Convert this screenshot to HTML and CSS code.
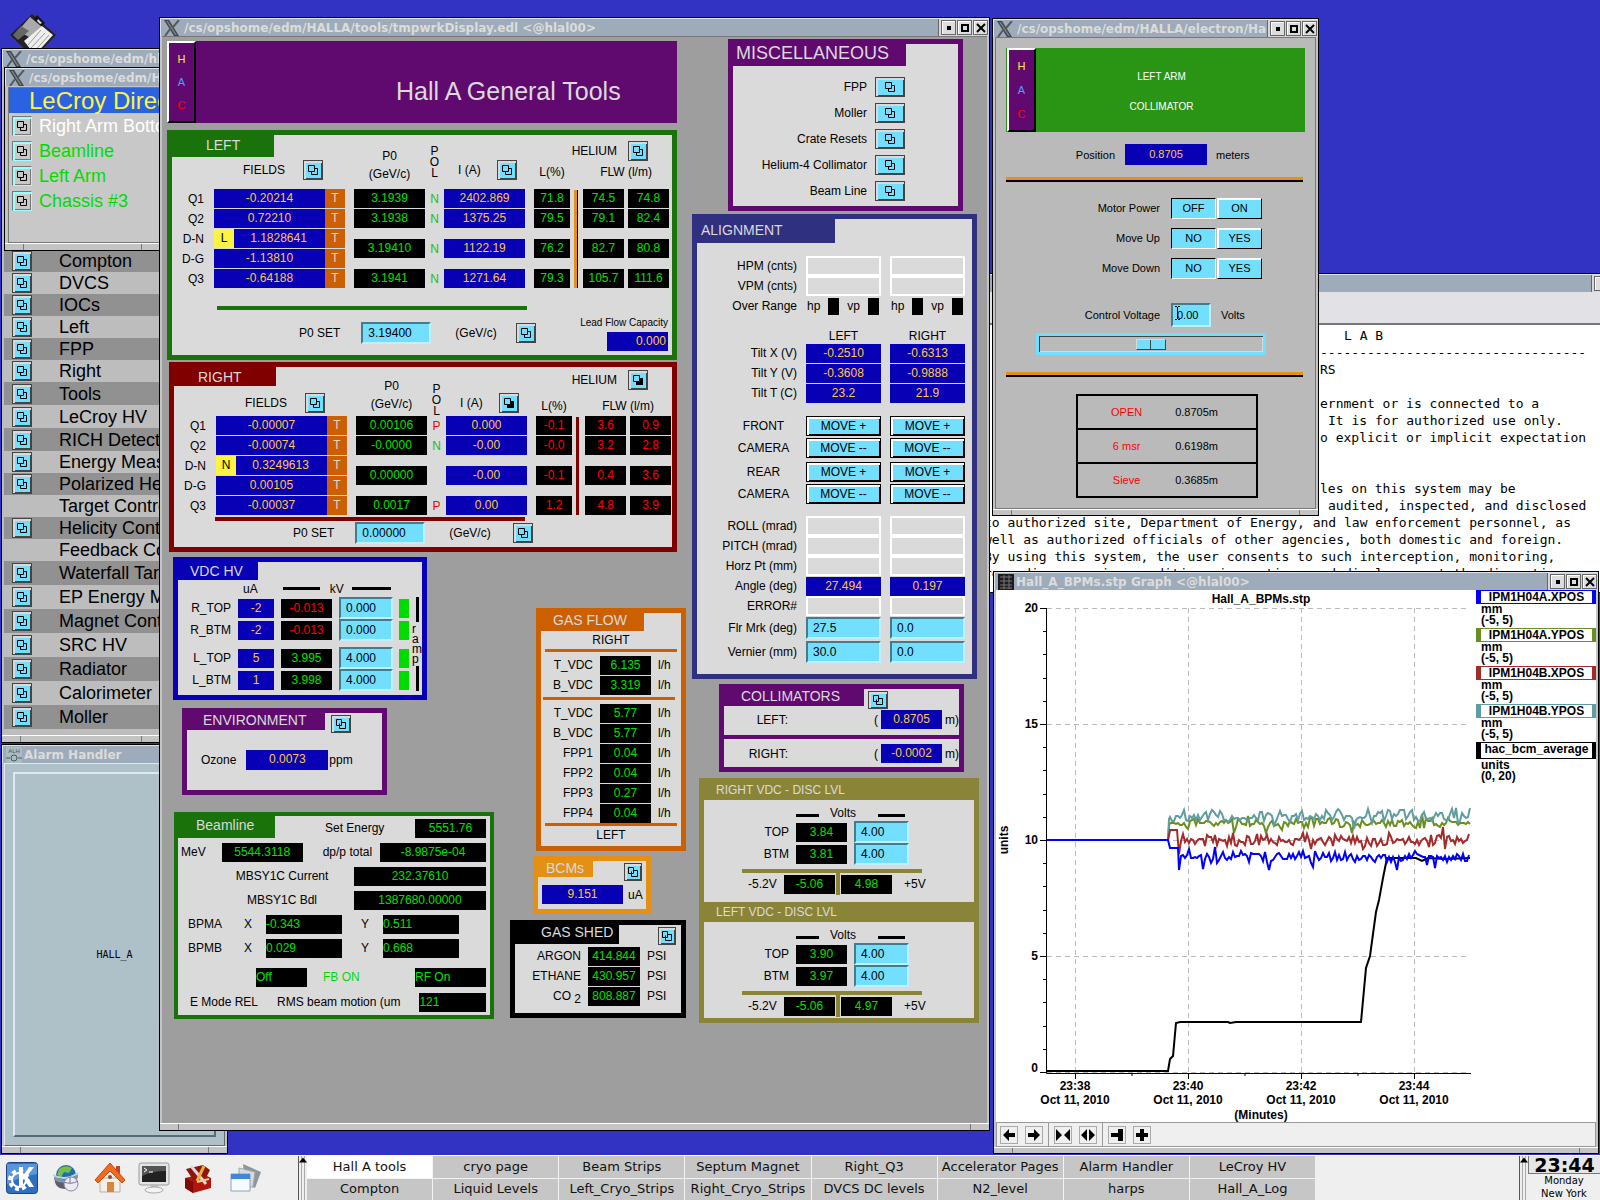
FILE: index.html
```html
<!DOCTYPE html>
<html lang="en">
<head>
  <meta charset="UTF-8" />
  <meta name="viewport" content="width=device-width, initial-scale=1" />
  <title>Hall A Operator Desktop</title>
  <link rel="stylesheet" href="styles.css">
</head>
<body>
  <!-- shared icons -->
  <svg width="0" height="0" class="defs" aria-hidden="true">
    <symbol id="rel" viewBox="0 0 10 10"><path d="M.5.5h6v6h-6zM6.5 3.5h3v6h-6v-3" fill="none" stroke="#000"/></symbol>
    <symbol id="relOn" viewBox="0 0 10 10"><path d="M3 3h7v7H3z"/><path d="M.5.5h6v6h-6z" fill="#73dfff" stroke="#000"/></symbol>
    <symbol id="relAlt" viewBox="0 0 10 10"><path d="M.5.5h5v6h-5zM3.5 4.5v5h6v-6h-4" fill="none" stroke="#000"/></symbol>
    <symbol id="xlogo" viewBox="0 0 16 16"><path d="M0 0h5l10 16h-5z" fill="#3f4448"/><path d="M2 1h2l9 14h-2z" fill="#777c80"/><path d="M15 0L9 7M6 9l-5 7" stroke="#555a5e" stroke-width="2"/></symbol>
    <symbol id="min" viewBox="0 0 12 12"><path d="M4 4h4v4H4z"/></symbol>
    <symbol id="max" viewBox="0 0 12 12"><path d="M3 3h6v6H3z" fill="none" stroke="#000" stroke-width="2"/></symbol>
    <symbol id="close" viewBox="0 0 12 12"><path d="M2 2l8 8M10 2l-8 8" stroke="#000" stroke-width="2"/></symbol>
  </svg>

  <main class="desktop">
    <svg class="floppy" viewBox="0 0 48 48" aria-hidden="true">
      <path d="M22 1L46 22L24 45L0 22z" fill="#222"/>
      <path d="M20 4L32 14L19 24L8 18z" fill="#aaa"/>
      <path d="M27 2l8 8-3 3-8-7z" fill="#111"/><path d="M28 6l4 4-2 1-3-3z" fill="#ddd"/>
      <path d="M32 13L43 22L25 42L14 28z" fill="#eee"/>
      <path d="M31 17L18 32M35 20L20 36M39 22L23 40" stroke="#999"/>
      <path d="M3 22l8-9 8 5-11 9z" fill="#666"/>
    </svg>

    <section class="window w-list">
      <header class="title"><svg><use href="#xlogo"/></svg><span>/cs/opshome/edm/hlal</span></header>
      <ul class="menu">
        <li><button class="rel" aria-label="Open Compton"><svg><use href="#rel"/></svg></button>Compton</li>
        <li><button class="rel" aria-label="Open DVCS"><svg><use href="#rel"/></svg></button>DVCS</li>
        <li><button class="rel" aria-label="Open IOCs"><svg><use href="#rel"/></svg></button>IOCs</li>
        <li><button class="rel" aria-label="Open Left"><svg><use href="#rel"/></svg></button>Left</li>
        <li><button class="rel" aria-label="Open FPP"><svg><use href="#rel"/></svg></button>FPP</li>
        <li><button class="rel" aria-label="Open Right"><svg><use href="#rel"/></svg></button>Right</li>
        <li class="mid"><button class="rel" aria-label="Open Tools"><svg><use href="#rel"/></svg></button>Tools</li>
        <li class="mid"><button class="rel" aria-label="Open LeCroy HV"><svg><use href="#rel"/></svg></button>LeCroy HV</li>
        <li class="mid"><button class="rel" aria-label="Open RICH"><svg><use href="#rel"/></svg></button>RICH Detector</li>
        <li><button class="rel" aria-label="Open Energy"><svg><use href="#rel"/></svg></button>Energy Meas</li>
        <li><button class="rel" aria-label="Open Polarized He"><svg><use href="#rel"/></svg></button>Polarized He3</li>
        <li>Target Control</li>
        <li><button class="rel" aria-label="Open Helicity"><svg><use href="#rel"/></svg></button>Helicity Control</li>
        <li>Feedback Control</li>
        <li class="tall"><button class="rel" aria-label="Open Waterfall"><svg><use href="#rel"/></svg></button>Waterfall Target</li>
        <li class="tall"><button class="rel" aria-label="Open EP Energy"><svg><use href="#rel"/></svg></button>EP Energy Meas</li>
        <li class="tall"><button class="rel" aria-label="Open Magnet"><svg><use href="#rel"/></svg></button>Magnet Control</li>
        <li class="tall"><button class="rel" aria-label="Open SRC HV"><svg><use href="#rel"/></svg></button>SRC HV</li>
        <li class="tall"><button class="rel" aria-label="Open Radiator"><svg><use href="#rel"/></svg></button>Radiator</li>
        <li class="tall"><button class="rel" aria-label="Open Calorimeter"><svg><use href="#rel"/></svg></button>Calorimeter</li>
        <li class="tall"><button class="rel" aria-label="Open Moller"><svg><use href="#rel"/></svg></button>Moller</li>
      </ul>
      <div class="grip"></div>
    </section>

    <section class="window w-lecroy">
      <header class="title"><svg><use href="#xlogo"/></svg><span>/cs/opshome/edm/HALLA</span></header>
      <div class="lecroy">
        <h1>LeCroy Directory</h1>
        <ul>
          <li class="white"><button class="rel gray" aria-label="Open Right Arm Bottom"><svg><use href="#rel"/></svg></button>Right Arm Bottom</li>
          <li><button class="rel gray" aria-label="Open Beamline"><svg><use href="#rel"/></svg></button>Beamline</li>
          <li><button class="rel gray" aria-label="Open Left Arm"><svg><use href="#rel"/></svg></button>Left Arm</li>
          <li><button class="rel gray" aria-label="Open Chassis 3"><svg><use href="#rel"/></svg></button>Chassis #3</li>
        </ul>
      </div>
      <div class="grip"></div>
    </section>

    <section class="window w-alarm">
      <header class="title">
        <svg viewBox="0 0 16 16"><path d="M0 0h16v16H0z" fill="#a9bcc3"/><text x="8" y="6" text-anchor="middle" class="alh">ALH</text><path d="M0 11h4M12 11h4M5 11a3 3 0 0 1 6 0a3 3 0 0 1-6 0" fill="none" stroke="#4d585c"/></svg>
        <span>Alarm Handler</span>
      </header>
      <div class="alarm"><div class="alarm-box">HALL_A</div></div>
      <div class="grip"></div>
    </section>

    <section class="window w-term">
      <header class="title"><span></span>
        <div class="winbtns"><button aria-label="Minimize"><svg><use href="#min"/></svg></button></div>
      </header>
      <div class="term-menu"></div>
      <div class="term">
        <p class="lab">L A B</p>
        <p class="in">----------------------------------</p>
        <p class="in">RS</p>
        <p class="in para">ernment or is connected to a</p>
        <p class="in2">It is for authorized use only.</p>
        <p class="in">o explicit or implicit expectation</p>
        <p class="in para2">les on this system may be</p>
        <p class="in2">audited, inspected, and disclosed</p>
        <p>to authorized site, Department of Energy, and law enforcement personnel, as</p>
        <p>well as authorized officials of other agencies, both domestic and foreign.</p>
        <p>By using this system, the user consents to such interception, monitoring,</p>
        <p>recording, copying, auditing, inspection, and disclosure at the discretion</p>
      </div>
    </section>

    <section class="window w-tools">
      <header class="title"><svg><use href="#xlogo"/></svg><span>/cs/opshome/edm/HALLA/tools/tmpwrkDisplay.edl &lt;@hlal00&gt;</span>
        <div class="winbtns">
          <button aria-label="Minimize"><svg><use href="#min"/></svg></button>
          <button aria-label="Maximize"><svg><use href="#max"/></svg></button>
          <button aria-label="Close"><svg><use href="#close"/></svg></button>
        </div>
      </header>

      <div class="tools">
        <div class="col-main">
          <div class="banner">
            <div class="hac"><span>H</span><span>A</span><span>C</span></div>
            <h1>Hall A General Tools</h1>
          </div>

          <section class="panel arm left-arm">
            <div class="head">
              <h2>LEFT</h2>
              <div class="helium">HELIUM <button class="rel" aria-label="Left helium"><svg><use href="#rel"/></svg></button></div>
            </div>
            <table class="quads">
              <colgroup><col class="c-name"><col class="c-field"><col class="c-t"><col class="c-p0"><col class="c-pol"><col class="c-amp"><col class="c-lvl"><col class="c-bar"><col class="c-flw"><col class="c-flw2"></colgroup>
              <thead>
                <tr>
                  <th></th>
                  <th colspan="2"><div class="hd">FIELDS <button class="rel" aria-label="Left fields"><svg><use href="#rel"/></svg></button></div></th>
                  <th><div class="stack">P0<br>(GeV/c)</div></th>
                  <th><div class="pol">P<br>O<br>L</div></th>
                  <th><div class="hd amp">I (A) <button class="rel" aria-label="Left currents"><svg><use href="#rel"/></svg></button></div></th>
                  <th>L(%)</th>
                  <th></th>
                  <th colspan="2">FLW (l/m)</th>
                </tr>
              </thead>
              <tbody>
                <tr><th>Q1</th><td><b class="val blue">-0.20214</b></td><td><b class="val t">T</b></td><td><b class="val">3.1939</b></td><td class="n">N</td><td><b class="val blue amps">2402.869</b></td><td><b class="val">71.8</b></td><td rowspan="5"><i class="vbar"></i></td><td><b class="val flw">74.5</b></td><td><b class="val flw">74.8</b></td></tr>
                <tr><th>Q2</th><td><b class="val blue">0.72210</b></td><td><b class="val t">T</b></td><td><b class="val">3.1938</b></td><td class="n">N</td><td><b class="val blue amps">1375.25</b></td><td><b class="val">79.5</b></td><td><b class="val flw">79.1</b></td><td><b class="val flw">82.4</b></td></tr>
                <tr><th>D-N</th><td><b class="val blue lock"><i>L</i>1.1828641</b></td><td><b class="val t">T</b></td><td rowspan="2"><b class="val">3.19410</b></td><td rowspan="2" class="n">N</td><td rowspan="2"><b class="val blue amps">1122.19</b></td><td rowspan="2"><b class="val">76.2</b></td><td rowspan="2"><b class="val flw">82.7</b></td><td rowspan="2"><b class="val flw">80.8</b></td></tr>
                <tr><th>D-G</th><td><b class="val blue">-1.13810</b></td><td><b class="val t">T</b></td></tr>
                <tr><th>Q3</th><td><b class="val blue">-0.64188</b></td><td><b class="val t">T</b></td><td><b class="val">3.1941</b></td><td class="n">N</td><td><b class="val blue amps">1271.64</b></td><td><b class="val">79.3</b></td><td><b class="val flw">105.7</b></td><td><b class="val flw">111.6</b></td></tr>
              </tbody>
            </table>
            <hr class="rule">
            <div class="p0set">
              <label for="p0l">P0 SET</label>
              <input id="p0l" class="set" value="3.19400">
              <span>(GeV/c)</span>
              <button class="rel" aria-label="Left P0 set"><svg><use href="#rel"/></svg></button>
              <div class="lead"><span>Lead Flow Capacity</span><b class="val blue">0.000</b></div>
            </div>
          </section>

          <section class="panel arm right-arm">
            <div class="head">
              <h2>RIGHT</h2>
              <div class="helium">HELIUM <button class="rel" aria-label="Right helium"><svg><use href="#relOn"/></svg></button></div>
            </div>
            <table class="quads">
              <colgroup><col class="c-name"><col class="c-field"><col class="c-t"><col class="c-p0"><col class="c-pol"><col class="c-amp"><col class="c-lvl"><col class="c-bar"><col class="c-flw"><col class="c-flw2"></colgroup>
              <thead>
                <tr>
                  <th></th>
                  <th colspan="2"><div class="hd">FIELDS <button class="rel" aria-label="Right fields"><svg><use href="#rel"/></svg></button></div></th>
                  <th><div class="stack">P0<br>(GeV/c)</div></th>
                  <th><div class="pol">P<br>O<br>L</div></th>
                  <th><div class="hd amp">I (A) <button class="rel" aria-label="Right currents"><svg><use href="#relOn"/></svg></button></div></th>
                  <th>L(%)</th>
                  <th></th>
                  <th colspan="2">FLW (l/m)</th>
                </tr>
              </thead>
              <tbody>
                <tr><th>Q1</th><td><b class="val blue">-0.00007</b></td><td><b class="val t">T</b></td><td><b class="val">0.00106</b></td><td class="p">P</td><td><b class="val blue amps">0.000</b></td><td><b class="val bad">-0.1</b></td><td rowspan="5"><i class="vbar"></i></td><td><b class="val bad flw">3.6</b></td><td><b class="val bad flw">0.9</b></td></tr>
                <tr><th>Q2</th><td><b class="val blue">-0.00074</b></td><td><b class="val t">T</b></td><td><b class="val">-0.0000</b></td><td class="n">N</td><td><b class="val blue amps">-0.00</b></td><td><b class="val bad">-0.0</b></td><td><b class="val bad flw">3.2</b></td><td><b class="val bad flw">2.8</b></td></tr>
                <tr><th>D-N</th><td><b class="val blue lock"><i>N</i>0.3249613</b></td><td><b class="val t">T</b></td><td rowspan="2"><b class="val">0.00000</b></td><td rowspan="2"></td><td rowspan="2"><b class="val blue amps">-0.00</b></td><td rowspan="2"><b class="val bad">-0.1</b></td><td rowspan="2"><b class="val bad flw">0.4</b></td><td rowspan="2"><b class="val bad flw">3.6</b></td></tr>
                <tr><th>D-G</th><td><b class="val blue">0.00105</b></td><td><b class="val t">T</b></td></tr>
                <tr><th>Q3</th><td><b class="val blue">-0.00037</b></td><td><b class="val t">T</b></td><td><b class="val">0.0017</b></td><td class="p">P</td><td><b class="val blue amps">0.00</b></td><td><b class="val bad">1.2</b></td><td><b class="val bad flw">4.8</b></td><td><b class="val bad flw">3.9</b></td></tr>
              </tbody>
            </table>
            <hr class="rule">
            <div class="p0set">
              <label for="p0r">P0 SET</label>
              <input id="p0r" class="set" value="0.00000">
              <span>(GeV/c)</span>
              <button class="rel" aria-label="Right P0 set"><svg><use href="#rel"/></svg></button>
            </div>
          </section>

          <div class="lower">
            <div class="col-a">
              <section class="panel vdc">
                <h2>VDC HV</h2>
                <div class="vdc-head"><span>uA</span><i></i><span>kV</span><i></i></div>
                <div class="vdc-body">
                  <div class="vdc-rows">
                    <div class="vdc-row"><label for="rt">R_TOP</label><b class="val blue">-2</b><b class="val bad">-0.013</b><input id="rt" class="set" value="0.000"><i class="led"></i></div>
                    <div class="vdc-row"><label for="rb">R_BTM</label><b class="val blue">-2</b><b class="val bad">-0.013</b><input id="rb" class="set" value="0.000"><i class="led"></i></div>
                    <div class="vdc-row gap"><label for="lt">L_TOP</label><b class="val blue">5</b><b class="val">3.995</b><input id="lt" class="set" value="4.000"><i class="led"></i></div>
                    <div class="vdc-row"><label for="lb">L_BTM</label><b class="val blue">1</b><b class="val">3.998</b><input id="lb" class="set" value="4.000"><i class="led"></i></div>
                  </div>
                  <div class="ramp"><i></i><span>r<br>a<br>m<br>p</span><i></i></div>
                </div>
              </section>

              <section class="panel env">
                <div class="head"><h2>ENVIRONMENT</h2><button class="rel" aria-label="Environment details"><svg><use href="#relAlt"/></svg></button></div>
                <div class="ozone"><span>Ozone</span><b class="val blue">0.0073</b><span>ppm</span></div>
              </section>

              <section class="panel beam">
                <div class="beam-row"><h2>Beamline</h2><span>Set Energy</span><b class="val w70">5551.76</b></div>
                <div class="beam-row mev"><span>MeV</span><b class="val w80">5544.3118</b><span>dp/p total</span><b class="val w106">-8.9875e-04</b></div>
                <div class="beam-row mb"><span>MBSY1C Current</span><b class="val w132">232.37610</b></div>
                <div class="beam-row mb"><span>MBSY1C Bdl</span><b class="val w132">1387680.00000</b></div>
                <div class="beam-row bpm"><span>BPMA</span><span>X</span><b class="val start">-0.343</b><span>Y</span><b class="val start">0.511</b></div>
                <div class="beam-row bpm"><span>BPMB</span><span>X</span><b class="val start">0.029</b><span>Y</span><b class="val start">0.668</b></div>
                <div class="beam-row fb"><b class="val start w50">Off</b><span class="on">FB ON</span><b class="val start w70">RF On</b></div>
                <div class="beam-row mode"><span>E Mode REL</span><span>RMS beam motion (um</span><b class="val start w70">121</b></div>
              </section>
            </div>

            <div class="col-b">
              <section class="panel gas">
                <h2>GAS FLOW</h2>
                <p>RIGHT</p>
                <hr class="rule">
                <div class="gas-row"><span>T_VDC</span><b class="val">6.135</b><span>l/h</span></div>
                <div class="gas-row"><span>B_VDC</span><b class="val">3.319</b><span>l/h</span></div>
                <hr class="rule mid">
                <div class="gas-row"><span>T_VDC</span><b class="val">5.77</b><span>l/h</span></div>
                <div class="gas-row"><span>B_VDC</span><b class="val">5.77</b><span>l/h</span></div>
                <div class="gas-row"><span>FPP1</span><b class="val">0.04</b><span>l/h</span></div>
                <div class="gas-row"><span>FPP2</span><b class="val">0.04</b><span>l/h</span></div>
                <div class="gas-row"><span>FPP3</span><b class="val">0.27</b><span>l/h</span></div>
                <div class="gas-row"><span>FPP4</span><b class="val">0.04</b><span>l/h</span></div>
                <hr class="rule">
                <p>LEFT</p>
              </section>

              <section class="panel bcm">
                <div class="head"><h2>BCMs</h2><button class="rel" aria-label="BCM details"><svg><use href="#relAlt"/></svg></button></div>
                <div class="bcm-row"><b class="val blue">9.151</b><span>uA</span></div>
              </section>

              <section class="panel shed">
                <div class="head"><h2>GAS SHED</h2><button class="rel" aria-label="Gas shed details"><svg><use href="#relAlt"/></svg></button></div>
                <div class="gas-row"><span>ARGON</span><b class="val">414.844</b><span>PSI</span></div>
                <div class="gas-row"><span>ETHANE</span><b class="val">430.957</b><span>PSI</span></div>
                <div class="gas-row"><span>CO <sub>2</sub></span><b class="val">808.887</b><span>PSI</span></div>
              </section>
            </div>
          </div>
        </div>

        <div class="col-side">
          <section class="panel misc">
            <h2>MISCELLANEOUS</h2>
            <div class="misc-row"><span>FPP</span><button class="rel wide" aria-label="FPP"><svg><use href="#rel"/></svg></button></div>
            <div class="misc-row"><span>Moller</span><button class="rel wide" aria-label="Moller"><svg><use href="#rel"/></svg></button></div>
            <div class="misc-row"><span>Crate Resets</span><button class="rel wide" aria-label="Crate Resets"><svg><use href="#rel"/></svg></button></div>
            <div class="misc-row"><span>Helium-4 Collimator</span><button class="rel wide" aria-label="Helium-4 Collimator"><svg><use href="#rel"/></svg></button></div>
            <div class="misc-row"><span>Beam Line</span><button class="rel wide" aria-label="Beam Line"><svg><use href="#rel"/></svg></button></div>
          </section>

          <section class="panel align">
            <h2>ALIGNMENT</h2>
            <div class="al-group">
              <div class="al-row"><span>HPM (cnts)</span><b class="blank"></b><b class="blank"></b></div>
              <div class="al-row"><span>VPM (cnts)</span><b class="blank"></b><b class="blank"></b></div>
              <div class="al-row"><span>Over Range</span><div class="range">hp<i></i>vp<i></i></div><div class="range">hp<i></i>vp<i></i></div></div>
            </div>
            <div class="al-group tilt">
              <div class="al-row cap"><span></span><em>LEFT</em><em>RIGHT</em></div>
              <div class="al-row"><span>Tilt X (V)</span><b class="val blue">-0.2510</b><b class="val blue">-0.6313</b></div>
              <div class="al-row"><span>Tilt Y (V)</span><b class="val blue">-0.3608</b><b class="val blue">-0.9888</b></div>
              <div class="al-row"><span>Tilt T (C)</span><b class="val blue">23.2</b><b class="val blue">21.9</b></div>
            </div>
            <div class="al-group cam">
              <div class="al-row"><em>FRONT</em><button class="move">MOVE +</button><button class="move">MOVE +</button></div>
              <div class="al-row"><em>CAMERA</em><button class="move">MOVE --</button><button class="move">MOVE --</button></div>
            </div>
            <div class="al-group cam rear">
              <div class="al-row"><em>REAR</em><button class="move">MOVE +</button><button class="move">MOVE +</button></div>
              <div class="al-row"><em>CAMERA</em><button class="move">MOVE --</button><button class="move">MOVE --</button></div>
            </div>
            <div class="al-group roll">
              <div class="al-row"><span>ROLL (mrad)</span><b class="blank"></b><b class="blank"></b></div>
              <div class="al-row"><span>PITCH (mrad)</span><b class="blank"></b><b class="blank"></b></div>
              <div class="al-row"><span>Horz Pt (mm)</span><b class="blank"></b><b class="blank"></b></div>
              <div class="al-row"><span>Angle (deg)</span><b class="val blue">27.494</b><b class="val blue">0.197</b></div>
              <div class="al-row"><span>ERROR#</span><b class="blank"></b><b class="blank"></b></div>
              <div class="al-row in"><span>Flr Mrk (deg)</span><input class="set" aria-label="Floor mark left" value="27.5"><input class="set" aria-label="Floor mark right" value="0.0"></div>
              <div class="al-row in"><span>Vernier (mm)</span><input class="set" aria-label="Vernier left" value="30.0"><input class="set" aria-label="Vernier right" value="0.0"></div>
            </div>
          </section>

          <section class="panel coll">
            <div class="head"><h2>COLLIMATORS</h2><button class="rel" aria-label="Collimator details"><svg><use href="#relAlt"/></svg></button></div>
            <div class="coll-row"><span>LEFT:</span><span>(</span><b class="val blue">0.8705</b><span>m)</span></div>
            <div class="coll-row second"><span>RIGHT:</span><span>(</span><b class="val blue">-0.0002</b><span>m)</span></div>
          </section>

          <section class="panel disc">
            <h2>RIGHT VDC - DISC LVL</h2>
            <div class="disc-body">
              <div class="volts"><i></i><span>Volts</span><i></i></div>
              <div class="disc-row"><label for="drt">TOP</label><b class="val">3.84</b><input id="drt" class="set" value="4.00"></div>
              <div class="disc-row"><label for="drb">BTM</label><b class="val">3.81</b><input id="drb" class="set" value="4.00"></div>
              <div class="supply"><span>-5.2V</span><b class="val">-5.06</b><i></i><b class="val">4.98</b><span>+5V</span></div>
            </div>
            <h2 class="lower-title">LEFT VDC - DISC LVL</h2>
            <div class="disc-body">
              <div class="volts"><i></i><span>Volts</span><i></i></div>
              <div class="disc-row"><label for="dlt">TOP</label><b class="val">3.90</b><input id="dlt" class="set" value="4.00"></div>
              <div class="disc-row"><label for="dlb">BTM</label><b class="val">3.97</b><input id="dlb" class="set" value="4.00"></div>
              <div class="supply"><span>-5.2V</span><b class="val">-5.06</b><i></i><b class="val">4.97</b><span>+5V</span></div>
            </div>
          </section>
        </div>
      </div>
      <div class="grip"></div>
    </section>

    <section class="window w-arm">
      <header class="title"><svg><use href="#xlogo"/></svg><span>/cs/opshome/edm/HALLA/electron/HacLcoll</span>
        <div class="winbtns">
          <button aria-label="Minimize"><svg><use href="#min"/></svg></button>
          <button aria-label="Maximize"><svg><use href="#max"/></svg></button>
          <button aria-label="Close"><svg><use href="#close"/></svg></button>
        </div>
      </header>
      <div class="collimator">
        <div class="banner green">
          <div class="hac"><span>H</span><span>A</span><span>C</span></div>
          <h1>LEFT ARM<br>COLLIMATOR</h1>
        </div>
        <div class="c-row pos"><span>Position</span><b class="val blue">0.8705</b><span>meters</span></div>
        <hr class="split">
        <div class="c-row"><span>Motor Power</span><button class="tgl in">OFF</button><button class="tgl">ON</button></div>
        <div class="c-row"><span>Move Up</span><button class="tgl in">NO</button><button class="tgl">YES</button></div>
        <div class="c-row"><span>Move Down</span><button class="tgl in">NO</button><button class="tgl">YES</button></div>
        <div class="c-row volt">
          <label for="cv">Control Voltage</label>
          <div class="cv-box">
            <input id="cv" class="set" value="0.00">
            <svg class="ibeam" viewBox="0 0 5 14" aria-hidden="true"><path d="M0 .5h2M3 .5h2M2.5 1v12M0 13.5h2M3 13.5h2" stroke="#000" fill="none"/></svg>
          </div>
          <span>Volts</span>
        </div>
        <input class="slider" type="range" min="0" max="100" value="50" aria-label="Control voltage slider">
        <hr class="split">
        <table class="stops">
          <tr><th>OPEN</th><td>0.8705m</td></tr>
          <tr><th>6 msr</th><td>0.6198m</td></tr>
          <tr><th>Sieve</th><td>0.3685m</td></tr>
        </table>
      </div>
      <div class="grip"></div>
    </section>

    <section class="window w-graph">
      <header class="title">
        <svg viewBox="0 0 16 16"><path d="M0 0h16v16H0z" fill="#1c1c1c"/><path d="M2 3h12M2 7h12M2 11h12M2 14h12M6 1v14M11 1v14" stroke="#777"/></svg>
        <span>Hall_A_BPMs.stp Graph &lt;@hlal00&gt;</span>
        <div class="winbtns">
          <button aria-label="Minimize"><svg><use href="#min"/></svg></button>
          <button aria-label="Maximize"><svg><use href="#max"/></svg></button>
          <button aria-label="Close"><svg><use href="#close"/></svg></button>
        </div>
      </header>
      <div class="graph">
        <svg class="plot" viewBox="0 0 480 532">
          <g id="axes"></g>
          <g id="traces"></g>
          <text x="265" y="13" text-anchor="middle">Hall_A_BPMs.stp</text>
          <text x="265" y="529" text-anchor="middle">(Minutes)</text>
          <text transform="rotate(-90 12 250)" x="12" y="250" text-anchor="middle">units</text>
        </svg>
        <div class="legend">
          <div class="key k1"><b>IPM1H04A.XPOS</b>mm<br>(-5, 5)</div>
          <div class="key k2"><b>IPM1H04A.YPOS</b>mm<br>(-5, 5)</div>
          <div class="key k3"><b>IPM1H04B.XPOS</b>mm<br>(-5, 5)</div>
          <div class="key k4"><b>IPM1H04B.YPOS</b>mm<br>(-5, 5)</div>
          <div class="key k5"><b>hac_bcm_average</b>units<br>(0, 20)</div>
        </div>
      </div>
      <div class="graph-bar">
        <button aria-label="Pan left"><svg viewBox="0 0 14 14"><path d="M1 7l6-6v4h6v4H7v4z"/></svg></button>
        <button aria-label="Pan right"><svg viewBox="0 0 14 14"><path d="M13 7L7 1v4H1v4h6v4z"/></svg></button>
        <i></i>
        <button aria-label="Zoom in"><svg viewBox="0 0 14 14"><path d="M0 1l6 6-6 6zM14 1L8 7l6 6z"/></svg></button>
        <button aria-label="Zoom out"><svg viewBox="0 0 14 14"><path d="M6 1L0 7l6 6zM8 1l6 6-6 6z"/></svg></button>
        <i></i>
        <button aria-label="Jump to end"><svg viewBox="0 0 14 14"><path d="M1 5h7V1h5v12H8V9H1z"/></svg></button>
        <button aria-label="Autoscale"><svg viewBox="0 0 14 14"><path d="M5 1h4v4h4v4H9v4H5V9H1V5h4z"/></svg></button>
      </div>
      <div class="grip"></div>
    </section>
  </main>

  <footer class="taskbar">
    <nav class="launch">
      <a href="#menu" aria-label="KDE menu"><svg viewBox="0 0 32 32"><rect x=".5" y=".5" width="31" height="31" rx="3" fill="#2f6fc0" stroke="#1b4384"/><path d="M1 2h30v10Q16 14 1 22z" fill="#5b95dc"/><circle cx="13" cy="18" r="9" fill="none" stroke="#fff" stroke-width="4" stroke-dasharray="4 3"/><circle cx="13" cy="18" r="7" fill="none" stroke="#fff" stroke-width="2"/><path d="M13 5h4v9l6-9h5l-7 9 7 11h-5l-5-8-1 1v7h-4z" fill="#fff"/></svg></a>
      <a href="#web" aria-label="Browser"><svg viewBox="0 0 32 32"><path d="M5 14q-2 13 11 13 12-2 11-13z" fill="#5c6066"/><circle cx="16" cy="13" r="10" fill="#1c6fb4"/><path d="M9 7q6-5 13-1l-3 5-5-1-3 5-4-2z" fill="#79bd4c"/><path d="M4 14q12 8 24-2v4q-12 9-24 2z" fill="#8b949c"/><path d="M3 13q12 7 25-2" fill="none" stroke="#c7d2dc" stroke-width="2"/><ellipse cx="21" cy="22" rx="7" ry="7" fill="#ecebf5" stroke="#8a8aa0"/><path d="M20 15v6M14 20q7 3 14-1" fill="none" stroke="#7777a0"/></svg></a>
      <a href="#home" aria-label="Home"><svg viewBox="0 0 32 32"><path d="M6 16h20v14H6z" fill="#f2eee8" stroke="#b9b0a6"/><path d="M22 4h4v9h-4z" fill="#c8402a"/><path d="M16 1L31 18l-3 3L16 9 4 21l-3-3z" fill="#f26a1c" stroke="#c9480a"/><path d="M13 20h7v10h-7z" fill="#d9853b"/><circle cx="16" cy="15" r="2" fill="#8c4a2a"/></svg></a>
      <a href="#term" aria-label="Terminal"><svg viewBox="0 0 32 32"><rect x="1" y="1" width="30" height="22" rx="2" fill="#e4e4e4" stroke="#9a9a9a"/><path d="M4 4h24v16H4z" fill="#222"/><path d="M4 4h24v5Q14 9 4 14z" fill="#555"/><path d="M6 6l3 2-3 2M11 10h4" fill="none" stroke="#fff"/><path d="M13 23h7l1 4h-9z" fill="#bbb"/><ellipse cx="16" cy="28" rx="9" ry="3" fill="#f4f4f4" stroke="#aaa"/></svg></a>
      <a href="#tools" aria-label="Toolbox"><svg viewBox="0 0 32 32"><path d="M3 16l18-4 8 4v10l-18 5-8-5z" fill="#b3140d"/><path d="M3 16l8 4v11l-8-5z" fill="#7c0b06"/><path d="M4 7l17-4 7 5-3 6-14 4z" fill="#8d1710"/><path d="M9 4l15 18" stroke="#d9d9d9" stroke-width="3"/><path d="M22 4l-7 15" stroke="#f0b13c" stroke-width="3"/><path d="M15 20l12-3" stroke="#e6d2a0" stroke-width="2"/></svg></a>
      <a href="#windows" aria-label="Show windows" class="last"><svg viewBox="0 0 32 32"><path d="M13 2l18 8-6 16-10-4z" fill="#8f959b"/><path d="M9 6l16 4-2 15H9z" fill="#d5dade" stroke="#9aa"/><path d="M1 12h19v17H1z" fill="#f7f9fc" stroke="#8aa2c0"/><path d="M1 12h19v5H1z" fill="#3f86dd"/></svg></a>
    </nav>
    <div class="handle"></div>
    <nav class="pager">
      <a href="#d1" class="now">Hall A tools</a><a href="#d2">cryo page</a><a href="#d3">Beam Strips</a><a href="#d4">Septum Magnet</a><a href="#d5">Right_Q3</a><a href="#d6">Accelerator Pages</a><a href="#d7">Alarm Handler</a><a href="#d8">LeCroy HV</a>
      <a href="#d9">Compton</a><a href="#d10">Liquid Levels</a><a href="#d11">Left_Cryo_Strips</a><a href="#d12">Right_Cryo_Strips</a><a href="#d13">DVCS DC levels</a><a href="#d14">N2_level</a><a href="#d15">harps</a><a href="#d16">Hall_A_Log</a>
    </nav>
    <div class="handle end"></div>
    <div class="clock"><time>23:44</time><span>Monday</span><span>New York</span></div>
  </footer>

  <script src="script.js"></script>
</body>
</html>
```
FILE: styles.css
```css
* { box-sizing: border-box; }

body {
  margin: 0;
  height: 100vh;
  display: flex;
  flex-direction: column;
  overflow: hidden;
  background: #3333c3;
  color: #000;
  font-family: "Liberation Sans", Arial, sans-serif;
  font-size: 12px;
  line-height: 14px;
}

h1, h2, p, ul { margin: 0; padding: 0; font-weight: normal; }
ul { list-style: none; }
b, i, em, th { font-weight: normal; font-style: normal; }
button, input { font: inherit; color: inherit; margin: 0; padding: 0; border-radius: 0; }
.defs { position: absolute; }

.desktop { position: relative; flex: 1; overflow: hidden; }
.floppy { position: absolute; left: 10px; top: 13px; width: 48px; height: 48px; }

/* windows */
.window {
  position: absolute;
  display: flex;
  flex-direction: column;
  border: 1px solid #000;
  background: #c4c4c4;
  overflow: hidden;
}
.w-list { left: 1px; top: 48px; width: 160px; height: 695px; }
.w-lecroy { left: 4px; top: 67px; width: 157px; height: 184px; }
.w-alarm { left: 1px; top: 744px; width: 227px; height: 410px; }
.w-term { left: 977px; top: 273px; width: 634px; height: 320px; }
.w-tools { left: 159px; top: 17px; width: 831px; height: 1114px; }
.w-arm { left: 992px; top: 18px; width: 327px; height: 498px; }
.w-graph { left: 993px; top: 571px; width: 606px; height: 583px; }

.title {
  display: flex;
  align-items: center;
  flex: none;
  height: 18px;
  padding-left: 3px;
  background: #9eabbb;
  border-top: 1px solid #dfe5ec;
  border-left: 1px solid #dfe5ec;
  color: #dcdcdc;
  font: bold 12px/16px "DejaVu Sans", sans-serif;
  white-space: nowrap;
}
.title > svg { width: 16px; height: 16px; margin-right: 4px; flex: none; }
.title > span { flex: 1; overflow: hidden; }
.alh { font: 6px "Liberation Sans", sans-serif; fill: #4d585c; }
.w-graph .title > svg, .w-alarm .title > svg { margin-right: 2px; }

.winbtns { display: flex; gap: 1px; padding: 1px 1px 0 2px; height: 17px; background: #d8d8d8; border-left: 1px solid #666; }
.winbtns button {
  width: 15px;
  height: 15px;
  display: grid;
  place-items: center;
  border: 1px solid #666;
  background: #ddd;
  box-shadow: inset 1px 1px #fff;
}
.winbtns svg { width: 12px; height: 12px; }

.grip { flex: none; height: 7px; display: flex; border-top: 1px solid #fff; background: #c4c4c4; }
.grip::before, .grip::after { content: ""; width: 18px; height: 7px; }
.grip::before { border-right: 1px solid #777; }
.grip::after { margin-left: auto; border-left: 1px solid #777; }

/* controls */
.rel {
  flex: none;
  width: 20px;
  height: 20px;
  display: grid;
  place-items: center;
  border: 1px solid #444;
  background: #73dfff;
  box-shadow: inset 2px 2px #dadada, inset -1px -1px #444;
}
.rel svg { width: 10px; height: 10px; }
.rel.wide { width: 30px; }
.rel.gray { background: #c8c8c8; border-color: #777 #9ff #9ff #777; box-shadow: inset 2px 2px #9ff, inset -1px -1px #777; }

.val {
  display: block;
  height: 19px;
  line-height: 19px;
  background: #000;
  color: #00e000;
  text-align: center;
  white-space: nowrap;
}
.val.blue { background: #0800b4; color: #ffc840; }
.val.bad { color: #f00; }
.val.t { width: 20px; background: #cc6000; color: #dadada; }
.val.amps { width: 81px; }
.val.flw { width: 41px; }
.val.start { text-align: left; }

.set {
  display: block;
  height: 22px;
  min-width: 0;
  padding: 0 5px;
  border: 2px solid;
  border-color: #437c8c #c0f0ff #c0f0ff #437c8c;
  background: #73dfff;
}

/* directory lists */
.menu { flex: 1; display: flex; flex-direction: column; justify-content: flex-end; padding: 0 0 6px 2px; background: #bdbdbd; font-size: 18px; }
.menu li { height: 22px; flex: none; display: flex; align-items: center; padding-left: 55px; white-space: nowrap; }
.menu li:has(.rel) { padding-left: 8px; }
.menu .rel { margin-right: 27px; }
.menu .mid { height: 23px; }
.menu .tall { height: 24px; }
.menu li:nth-child(odd) { background: #919191; }

.lecroy { flex: 1; margin: 1px 0 0 3px; border: 1px solid #777; background: #c8c8c8; font-size: 18px; overflow: hidden; }
.lecroy h1 { height: 25px; padding-left: 20px; background: #2a62e2; color: #fdf344; font-size: 24px; line-height: 26px; white-space: nowrap; }
.lecroy li { display: flex; align-items: center; gap: 7px; height: 25px; padding-left: 3px; color: #00dc00; white-space: nowrap; }
.lecroy .white { color: #fff; }

.alarm { flex: 1; margin: 0 2px; padding: 8px; border: 1px solid; border-color: #dfe8ec #5c6b70 #5c6b70 #dfe8ec; background: #aec1c8; }
.alarm-box { height: 100%; display: grid; place-items: center; border: 2px solid; border-color: #dfe8ec #5c6b70 #5c6b70 #dfe8ec; font: 10px "DejaVu Sans Mono", monospace; }

/* terminal */
.term-menu { height: 33px; flex: none; background: #e1e1e6; border-bottom: 2px solid #777; }
.term { flex: 1; padding: 2px 6px; background: #fff; font: 13px/17px "DejaVu Sans Mono", monospace; white-space: nowrap; }
.term .in { padding-left: 336px; }
.term .in2 { padding-left: 344px; }
.term .lab { padding-left: 360px; }
.term .para { margin-top: 17px; }
.term .para2 { margin-top: 34px; }

/* tools display */
.tools { flex: 1; display: flex; gap: 15px; align-items: flex-start; margin: 0 2px; padding: 2px 8px 0 5px; border-top: 1px solid #777; background: #9e9e9e; }
.col-main { width: 510px; padding-top: 2px; }
.col-side { width: 287px; }

.banner { display: flex; height: 82px; background: #600a70; color: #dadada; }
.banner h1 { flex: 1; padding: 36px 0 0 200px; font-size: 25px; line-height: 28px; white-space: nowrap; }
.hac {
  width: 29px;
  display: flex;
  flex-direction: column;
  justify-content: space-around;
  align-items: center;
  padding: 4px 0;
  border: 2px solid;
  border-color: #fff #000 #000 #fff;
  background: #600a70;
  font-size: 11px;
}
.hac span:nth-child(1) { color: #ffee30; }
.hac span:nth-child(2) { color: #48a0ff; }
.hac span:nth-child(3) { color: #f00; }

.panel { --c: #600a70; border: 5px solid var(--c); background: #dadada; }
.panel h2 { width: fit-content; background: var(--c); color: #dadada; font-size: 14px; white-space: nowrap; }
.rule { height: 4px; margin: 0; border: 0; background: var(--c); }
.head { display: flex; }

.arm .head { height: 22px; }
.arm h2 { width: 102px; padding-left: 34px; line-height: 20px; }
.helium { display: flex; align-items: center; gap: 11px; height: 20px; margin: 6px 24px 0 auto; }
.left-arm { --c: #1a720a; margin-top: 7px; height: 230px; }
.right-arm { --c: #800000; width: 508px; margin: 2px 0 0 2px; height: 190px; }
.right-arm .head { height: 19px; }
.right-arm h2 { padding-left: 24px; }
.right-arm .helium { margin-top: 3px; }

.quads { table-layout: fixed; width: 497px; margin-top: -12px; border-collapse: separate; border-spacing: 0 1px; text-align: center; }
.quads th, .quads td { padding: 0; }
.quads tr { height: 19px; }
.quads thead th { height: 40px; vertical-align: bottom; padding-bottom: 9px; white-space: nowrap; }
.quads tbody th { text-align: right; padding-right: 10px; }
.right-arm .quads thead th { padding-bottom: 2px; }
.c-name { width: 42px; }
.c-field { width: 111px; }
.c-t { width: 29px; }
.c-p0 { width: 71px; }
.c-pol { width: 19px; }
.c-amp { width: 90px; }
.c-lvl { width: 36px; }
.c-bar { width: 13px; }
.c-flw { width: 45px; }
.c-flw2 { width: 41px; }
.quads .n { color: #18c018; }
.quads .p { color: #f00; }
.lock { position: relative; padding-left: 18px; }
.lock i { position: absolute; left: 0; top: 0; width: 20px; height: 19px; background: #fdf344; color: #000; }
.vbar { display: block; width: 4px; height: 98px; margin-left: 4px; background: #e39014; border-right: 1px solid #000; }
.right-arm .vbar { background: #800000; border: 0; width: 3px; }
.hd { display: flex; align-items: center; gap: 18px; height: 18px; padding-left: 29px; }
.hd.amp { gap: 16px; padding-left: 14px; }
.right-arm .hd { height: 20px; }
.stack { line-height: 18px; height: 32px; }
.right-arm .stack { height: 36px; }
.pol { line-height: 11px; height: 33px; }
.right-arm .pol { height: 29px; }
.arm .rule { width: 310px; margin: 17px 0 0 45px; }
.right-arm .rule { margin: 1px 0 0 41px; }

.p0set { display: flex; align-items: center; height: 45px; padding-left: 127px; }
.p0set .set { width: 70px; margin: 0 24px 0 21px; }
.p0set .rel { margin-left: 19px; }
.right-arm .p0set { height: 24px; padding-left: 119px; }
.right-arm .rel { margin-left: 0; }
.right-arm .p0set .rel { margin-left: 22px; }
.lead { margin: 0 4px 0 auto; font-size: 10px; line-height: 18px; display: flex; flex-direction: column; align-items: flex-end; }
.lead .val { width: 61px; padding-right: 2px; text-align: right; font-size: 12px; }

.lower { display: flex; justify-content: space-between; margin-right: -9px; padding-left: 5px; }
.col-a { width: 322px; padding-top: 5px; }
.col-b { width: 176px; padding-top: 56px; }

.vdc { --c: #0800b4; width: 254px; height: 143px; margin-left: 1px; }
.vdc h2 { width: 80px; padding-left: 12px; line-height: 18px; }
.vdc-head { display: flex; align-items: center; height: 17px; padding-left: 65px; }
.vdc-head i { width: 37px; height: 3px; margin: 0 10px 0 25px; background: #000; }
.vdc-head i:last-child { margin: 0 0 0 8px; width: 39px; }
.vdc-body { display: flex; gap: 4px; }
.vdc-row { display: grid; grid-template-columns: 53px 36px 51px 54px 9px; column-gap: 7px; align-items: center; height: 22px; }
.vdc-row.gap { margin-top: 6px; }
.vdc-row label { text-align: right; }
.led { height: 19px; background: #00dc00; margin-left: -1px; }
.ramp { width: 8px; display: flex; flex-direction: column; align-items: center; justify-content: space-between; height: 94px; line-height: 10px; }
.ramp i { width: 3px; height: 25px; background: #000; }

.env { width: 205px; height: 87px; margin: 8px 0 0 10px; }
.env h2 { width: 138px; height: 17px; padding-left: 16px; }
.env .rel, .bcm .rel, .shed .rel, .coll .rel { margin: 2px 0 0 6px; height: 18px; }
.ozone { display: flex; align-items: center; padding: 17px 0 0 14px; }
.ozone .val { width: 82px; margin: 0 1px 0 10px; height: 20px; }

.beam { --c: #1a720a; border-width: 4px; width: 320px; height: 207px; margin: 17px 0 0 2px; }
.beam h2 { width: 97px; height: 22px; align-self: flex-start; padding-left: 18px; line-height: 18px; margin-right: 50px; }
.beam-row { display: flex; align-items: center; height: 24px; padding-right: 4px; white-space: nowrap; }
.beam-row .val:last-child { margin-left: auto; }
.w50 { width: 51px; }
.w70 { width: 71px; }
.w80 { width: 81px; }
.w106 { width: 106px; }
.w132 { width: 132px; }
.mev { padding-left: 3px; }
.mev .val:nth-child(2) { margin: 0 20px 0 16px; }
.mb span { width: 112px; margin-left: 48px; text-align: center; }
.bpm { display: grid; grid-template-columns: 56px 22px 76px 41px 76px; padding-left: 10px; }
.bpm span:nth-of-type(3) { padding-left: 19px; }
.beam .bpm .val:last-child { margin-left: 0; }
.fb { height: 26px; margin-top: 4px; padding-left: 78px; gap: 16px; }
.on { color: #00dc00; }
.mode { padding-left: 12px; gap: 19px; }

.gas { --c: #cc6000; width: 150px; height: 243px; margin-left: 26px; }
.gas h2 { width: 103px; height: 18px; padding-left: 12px; }
.gas p { text-align: center; line-height: 18px; }
.gas .rule { margin: 0 4px; height: 3px; }
.gas .rule + .gas-row { margin-top: 3px; }
.gas .rule.mid { margin: 2px 6px 2px 2px; }
.gas-row { display: grid; grid-template-columns: 52px 51px 20px; column-gap: 7px; align-items: center; height: 20px; text-align: left; }
.gas-row span:first-child { text-align: right; }

.bcm { --c: #e39014; width: 118px; height: 58px; margin: 5px 0 0 23px; }
.bcm h2 { width: 55px; height: 16px; padding-left: 8px; }
.bcm .rel { margin-left: auto; margin-right: 4px; width: 18px; }
.bcm-row { display: flex; align-items: center; gap: 5px; padding: 4px 0 0 4px; }
.bcm-row .val { width: 81px; }

.shed { --c: #000; width: 176px; height: 98px; margin-top: 6px; }
.shed .head { height: 21px; }
.shed h2 { width: 104px; height: 19px; padding-left: 26px; }
.shed .rel { margin-left: auto; margin-right: 5px; width: 18px; }
.shed .gas-row { grid-template-columns: 66px 52px 25px; }
.shed sub { line-height: 0; font-size: 12px; }

.misc { width: 235px; height: 172px; margin-left: 36px; }
.misc h2 { width: 173px; height: 22px; margin-bottom: 8px; padding-left: 3px; font-size: 18px; line-height: 18px; }
.misc-row { display: flex; align-items: center; justify-content: flex-end; gap: 8px; height: 26px; padding-right: 53px; }

.align { --c: #303080; width: 285px; height: 465px; margin-top: 3px; }
.align h2 { width: 138px; height: 24px; padding-left: 4px; line-height: 22px; }
.al-group { padding: 13px 7px 0 0; }
.al-row { display: grid; grid-template-columns: 99px 75px 75px; column-gap: 9px; align-items: center; justify-content: end; height: 20px; }
.al-row span { text-align: right; }
.al-row em { text-align: center; }
.al-row > em:first-child { padding-left: 32px; }
.blank { height: 20px; border: 2px solid #fff; }
.range { display: flex; align-items: center; justify-content: space-between; padding: 0 2px 0 1px; }
.range i { width: 11px; height: 17px; background: #000; }
.tilt { padding-top: 12px; }
.al-row.cap { height: 15px; }
.cam { padding-top: 12px; }
.cam .al-row { height: 22px; }
.rear { padding-top: 2px; }
.roll { padding-top: 11px; }
.al-row.in { height: 24px; }
.move {
  height: 20px;
  border: 1px solid #000;
  background: #73dfff;
  box-shadow: inset 2px 2px #fff, inset -1px -1px #000;
}

.coll { width: 245px; height: 88px; margin: 5px 0 0 27px; }
.coll .head { height: 17px; }
.coll h2 { width: 140px; height: 17px; padding-left: 17px; }
.coll .rel { margin-left: 4px; }
.coll-row { display: grid; grid-template-columns: 64px 87px 61px 14px; column-gap: 3px; align-items: center; height: 27px; }
.coll-row span:nth-child(-n+2) { text-align: right; }
.second { border-top: 4px solid var(--c); height: 33px; margin-top: 2px; }

.disc { --c: #8a8438; width: 280px; height: 245px; margin: 6px 0 0 7px; }
.disc h2 { width: 100%; height: 17px; padding-left: 12px; font-size: 12px; }
.disc .lower-title { height: 20px; line-height: 20px; }
.disc-body { height: 102px; padding-top: 5px; }
.lower-title + .disc-body { height: 96px; }
.volts { display: flex; align-items: center; padding-left: 92px; height: 16px; }
.volts i { width: 23px; height: 3px; background: #000; margin: 5px 11px 0 0; }
.volts i:last-child { width: 27px; margin: 5px 0 0 22px; }
.disc-row { display: grid; grid-template-columns: 85px 51px 55px; column-gap: 7px; align-items: center; height: 22px; }
.disc-row label { text-align: right; }
.supply { display: flex; align-items: center; gap: 6px; width: 180px; height: 26px; margin: 4px 0 0 38px; padding-left: 6px; border-top: 4px solid var(--c); white-space: nowrap; }
.supply span { flex: none; width: 30px; }
.supply span:last-child { margin-left: 6px; }
.supply .val { flex: none; width: 51px; }
.supply i { flex: none; width: 4px; height: 22px; background: var(--c); margin: 0 -5px; }

/* collimator display */
.collimator { flex: 1; margin: 0 2px; padding: 10px; border: 1px solid #777; background: #bababa; font-size: 11px; }
.green { height: 84px; background: #2a9415; color: #fff; padding-left: 1px; }
.banner.green h1 { padding: 14px 18px 0 0; text-align: center; font-size: 10px; line-height: 30px; }
.c-row { display: grid; grid-template-columns: 155px 45px 45px; column-gap: 1px; align-items: center; height: 30px; }
.c-row > :first-child { text-align: right; padding-right: 1px; }
.c-row .tgl { margin: 0 -9px 0 9px; }
.c-row.pos { grid-template-columns: 110px 82px 50px; column-gap: 9px; height: 45px; }
.pos .val { height: 21px; line-height: 21px; }
.split { height: 5px; margin: 0 2px 11px 0; border: 0; background: #e39014; border-bottom: 2px solid #000; }
.tgl { height: 21px; border: 1px solid; border-color: #fff #000 #000 #fff; background: #73dfff; box-shadow: inset 1px 1px #fff; }
.tgl.in { border-color: #000 #fff #fff #000; box-shadow: none; }
.c-row.volt { grid-template-columns: 155px 40px 45px; column-gap: 10px; height: 24px; margin-top: 20px; }
.cv-box { position: relative; }
.volt .set { width: 40px; height: 24px; padding: 0 4px; }
.ibeam { position: absolute; left: 4px; top: 3px; width: 5px; height: 14px; }
.slider {
  display: block;
  appearance: none;
  width: 230px;
  height: 22px;
  margin: 6px 0 17px 30px;
  padding: 1px;
  border: 3px solid #73dfff;
  background: #bababa;
  box-shadow: inset 1px 1px #444, inset -1px -1px #dadada;
}
.slider::-webkit-slider-thumb {
  appearance: none;
  width: 30px;
  height: 11px;
  border: 1px solid;
  border-color: #dadada #444 #444 #dadada;
  background: linear-gradient(90deg, #73dfff 13px, #444 13px, #444 14px, #73dfff 14px);
}
.stops { width: 182px; margin: 17px 0 0 70px; border-collapse: collapse; border: 2px solid #000; text-align: center; }
.stops tr { height: 34px; border-bottom: 2px solid #000; }
.stops th { width: 100px; padding: 0; color: #f00; }
.stops td { padding: 0 38px 0 0; }

/* strip chart */
.graph { flex: 1; display: flex; margin: 0 2px; background: #fff; font-weight: bold; }
.plot { flex: none; width: 480px; height: 532px; font: bold 12px "Liberation Sans", sans-serif; }
.legend { flex: 1; }
.key { height: 38px; line-height: 11px; padding-left: 5px; }
.key b { display: block; height: 14px; margin: 0 0 0 -5px; border: 1px solid var(--k); border-width: 1px 4px 1px 5px; line-height: 12px; font-weight: bold; text-align: center; }
.k1 { --k: #0000ff; }
.k2 { --k: #6b8e23; }
.k3 { --k: #a52a2a; }
.k4 { --k: #5f9ea0; }
.k5 { --k: #000; }
.k5 b { height: 17px; margin-bottom: 1px; }
.graph-bar { flex: none; display: flex; align-items: center; gap: 7px; height: 25px; margin: 0 2px; padding-left: 3px; background: #efefef; border: 1px solid #999; }
.graph-bar button { width: 18px; height: 18px; display: grid; place-items: center; border: 1px solid #aaa; background: #efefef; }
.graph-bar svg { width: 14px; height: 14px; }
.graph-bar i { width: 1px; height: 100%; background: #999; margin: 0 -2px; }

/* taskbar */
.taskbar { display: flex; height: 45px; flex: none; background: #efefef; border-top: 1px solid #fff; font-family: "DejaVu Sans", sans-serif; }
.launch { display: flex; align-items: center; gap: 12px; width: 298px; padding-left: 6px; }
.launch svg { display: block; width: 32px; height: 32px; }
.launch .last { margin-left: 4px; }
.handle { width: 9px; background: repeating-linear-gradient(90deg, #efefef 0 2px, #aaa 2px 3px); border-left: 1px solid #555; }
.handle::before { content: ""; display: block; width: 8px; height: 8px; background: #000; clip-path: polygon(50% 20%, 100% 80%, 0 80%); }
.pager { display: grid; grid-template-columns: repeat(8, 1fr); gap: 1px; width: 63%; background: #f3f3f3; }
.pager a { display: grid; place-items: center; background: #c6c6c6; color: #111; font-size: 13px; text-decoration: none; white-space: nowrap; }
.pager .now { background: #fff; }
.end { margin-left: auto; }
.clock { width: 72px; display: flex; flex-direction: column; align-items: center; font-size: 10px; line-height: 13px; }
.clock time { width: 100%; height: 18px; border: 1px solid #777; border-width: 0 0 1px 1px; background: #e6e6e6; text-align: center; font-size: 19px; font-weight: bold; line-height: 18px; }
```
FILE: script.js
```js
const NS = "http://www.w3.org/2000/svg";
const axes = document.getElementById("axes");
const traces = document.getElementById("traces");

function add(parent, tag, attrs, text) {
  const el = document.createElementNS(NS, tag);
  for (const k in attrs) el.setAttribute(k, attrs[k]);
  if (text) el.textContent = text;
  parent.appendChild(el);
}

// y axis, 0..20
for (let v = 0; v <= 20; v++) {
  const y = Math.round(482 - v * 23.2);
  const major = v % 5 === 0;
  add(axes, "path", { d: `M${major ? 44 : 47} ${y + 0.5}H50`, stroke: "#000" });
  if (major) {
    add(axes, "path", { d: `M51 ${y + 0.5}H470`, stroke: "#bbb", "stroke-dasharray": "5 4" });
    add(axes, "text", { x: 42, y: v === 0 ? y : y + 4, "text-anchor": "end" }, String(v));
  }
}

// x axis, one tick a minute
["23:38", "23:40", "23:42", "23:44"].forEach((t, i) => {
  const x = 79 + i * 113;
  add(axes, "path", { d: `M${x + 0.5} 18V482`, stroke: "#bbb", "stroke-dasharray": "5 4" });
  add(axes, "path", { d: `M${x + 0.5} 483v6`, stroke: "#000" });
  if (i < 3) add(axes, "path", { d: `M${x + 57} 483v3`, stroke: "#000" });
  add(axes, "text", { x, y: 500, "text-anchor": "middle" }, t);
  add(axes, "text", { x, y: 514, "text-anchor": "middle" }, "Oct 11, 2010");
});
add(axes, "path", { d: "M50.5 18V483.5H475", fill: "none", stroke: "#000" });

// small repeatable generator for the beam jitter
let seed = 7;
function rnd() {
  seed = (seed * 16807) % 2147483647;
  return seed / 2147483647;
}

function jitter(lead, from, base, amp, color) {
  let d = lead;
  for (let x = from; x <= 474; x += 2) {
    let n = (rnd() + rnd() - 1) * amp;
    if (rnd() > 0.88) n *= 2.2;
    d += ` L${x} ${Math.round(base + n)}`;
  }
  add(traces, "path", { d, fill: "none", stroke: color, "stroke-width": 2 });
}

add(traces, "path", {
  d: "M50 481H172L174 469L177 466L180 433L184 432H232L234 433L240 432H365L370 378L374 366L380 322L383 310L387 288L391 268H420L426 271L432 268L450 269L474 268",
  fill: "none", stroke: "#000", "stroke-width": 2
});
jitter("M172 250 L173 236", 174, 233, 6, "#6b8e23");
jitter("M172 250 L173 229", 174, 226, 8, "#5f9ea0");
jitter("M172 250 L174 240 L181 240 L183 264", 185, 250, 8, "#a52a2a");
jitter("M51 250 L172 250 L174 258 L182 258 L183 280", 185, 267, 7, "#0000ff");
```
